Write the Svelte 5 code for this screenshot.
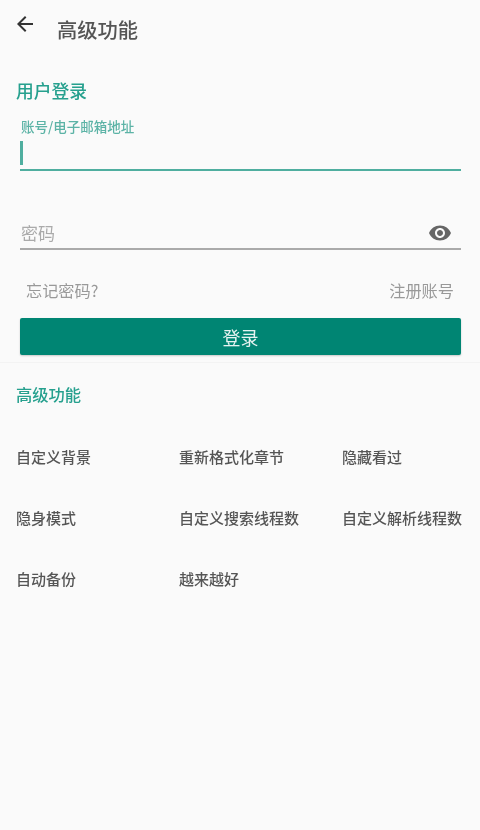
<script>
  const features = [
    '自定义背景', '重新格式化章节', '隐藏看过',
    '隐身模式', '自定义搜索线程数', '自定义解析线程数',
    '自动备份', '越来越好'
  ];
</script>

<div class="page">
  <header class="toolbar">
    <button class="back" aria-label="返回">
      <svg viewBox="0 0 24 24" width="24" height="24"><path d="M20 11H7.83l5.59-5.59L12 4l-8 8 8 8 1.41-1.41L7.83 13H20v-2z" /></svg>
    </button>
    <h1>高级功能</h1>
  </header>

  <section class="login">
    <h2>用户登录</h2>
    <div class="field active">
      <span class="float-label">账号/电子邮箱地址</span>
      <div class="input-row"><span class="caret"></span></div>
    </div>
    <div class="field pwd">
      <div class="input-row">
        <span class="placeholder">密码</span>
        <svg class="eye" viewBox="0 0 24 24" width="24" height="24"><path d="M12 4.5C7 4.5 2.73 7.61 1 12c1.73 4.39 6 7.5 11 7.5s9.27-3.11 11-7.5c-1.73-4.39-6-7.5-11-7.5zM12 17c-2.76 0-5-2.24-5-5s2.24-5 5-5 5 2.24 5 5-2.24 5-5 5zm0-8c-1.66 0-3 1.34-3 3s1.34 3 3 3 3-1.34 3-3-1.34-3-3-3z" /></svg>
      </div>
    </div>
    <div class="links">
      <span>忘记密码?</span>
      <span>注册账号</span>
    </div>
    <button class="submit">登录</button>
  </section>

  <section class="advanced">
    <h2>高级功能</h2>
    <div class="grid">
      {#each features as f}
        <span class="item">{f}</span>
      {/each}
    </div>
  </section>
</div>

<style>
  :global(body) { margin: 0; background: #fafafa; }
  .page { width: 480px; height: 830px; background: #fafafa; overflow: hidden; font-family: "Noto Sans CJK SC", "Liberation Sans", sans-serif; filter: blur(0.7px); }
  .toolbar { display: flex; align-items: flex-start; height: 60px; padding-left: 13px; box-sizing: border-box; }
  .back { width: 24px; height: 24px; margin-top: 12px; padding: 0; border: 0; background: none; }
  .back svg { display: block; fill: #333; }
  h1 { margin: 15px 0 0 20px; font-size: 20.3px; line-height: 28px; font-weight: 500; color: #555; }
  .login { padding: 19px 19px 0 20px; height: 303px; box-sizing: border-box; border-bottom: 1px solid #f3f3f3; }
  h2 { margin: 0 0 0 -4px; font-size: 17.8px; line-height: 22px; font-weight: 500; color: #26a08e; }
  .field { box-sizing: border-box; }
  .field.active { margin-top: 16px; }
  .float-label { display: block; font-size: 13.5px; line-height: 18px; font-weight: 500; color: #5cb3a6; padding-left: 1px; }
  .input-row { display: flex; align-items: center; justify-content: space-between; box-sizing: border-box; }
  .active .input-row { height: 36px; border-bottom: 2px solid #4fae9f; align-items: flex-start; }
  .caret { width: 3px; height: 24px; margin-top: 6px; background: #4fae9f; }
  .pwd { margin-top: 44px; }
  .pwd .input-row { height: 35px; border-bottom: 2px solid #aaa; }
  .placeholder { font-size: 17px; color: #aaa; padding: 2px 0 0 1px; }
  .eye { fill: #666; margin: 3px 9px 0 0; }
  .links { display: flex; justify-content: space-between; padding: 0 7px 0 6px; margin-top: 28px; font-size: 16.2px; line-height: 24px; color: #999; }
  .submit { display: block; width: 100%; height: 37px; margin-top: 16px; padding: 0; border: 0; border-radius: 2px; background: #008573; color: #e6f3f1; font-family: inherit; font-size: 18px; box-shadow: 0 1px 2px rgba(0,0,0,.2); }
  .advanced { padding: 20px 16px 0; }
  .advanced h2 { margin: 0; font-size: 16.3px; }
  .grid { display: grid; grid-template-columns: 163px 163px 1fr; grid-auto-rows: 61px; margin-top: 21px; }
  .item { font-size: 15px; line-height: 61px; color: #555; white-space: nowrap; font-weight: 500; }
</style>
